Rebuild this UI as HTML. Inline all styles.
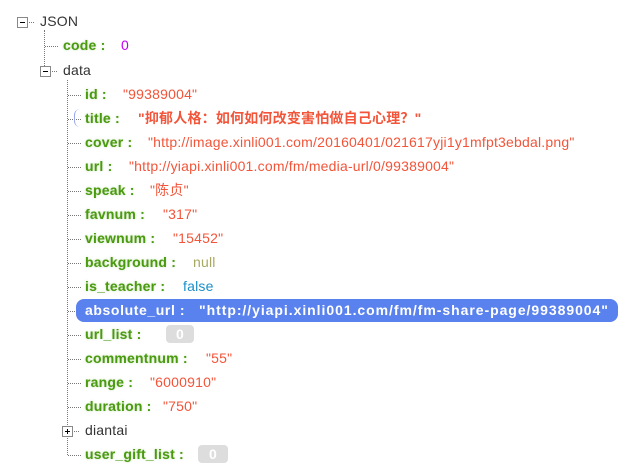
<!DOCTYPE html>
<html><head><meta charset="utf-8"><style>
body{margin:0;width:635px;height:475px;background:#fff;position:relative;overflow:hidden;font-family:"Liberation Sans","Noto Sans CJK SC",sans-serif;font-size:14px;letter-spacing:0.2px}
.r{position:absolute;height:20px;line-height:20px;white-space:nowrap}
.k{color:#4a9a0f;font-weight:bold;text-shadow:0 0 2px rgba(80,160,30,.35)}
.s{color:#f2553a}
.n{color:#333}
.v{position:absolute;white-space:nowrap;height:20px;line-height:20px}
.vl{position:absolute;border-left:1px dotted #777}
.hl{position:absolute;border-top:1px dotted #777;width:13px}
.box{position:absolute;width:9px;height:9px;border:1px solid #888;background:#fff}
.box:before{content:"";position:absolute;left:2px;top:4px;width:5px;height:1px;background:#000}
.plus:after{content:"";position:absolute;left:4px;top:2px;width:1px;height:5px;background:#000}
.badge{position:absolute;background:#ddd;color:#fff;border-radius:4px;height:18px;line-height:18px;text-align:center;font-weight:bold}
</style></head><body>
<div class="vl" style="left:44px;top:30px;height:40px"></div>
<div class="vl" style="left:67px;top:80px;height:375px"></div>
<div class="box" style="left:17px;top:17px"></div>
<div class="hl" style="left:29px;top:22px;width:5px"></div>
<div class="r n" style="left:40px;top:11px">JSON</div>
<div class="hl" style="left:45px;top:46px"></div>
<div class="r k" style="left:63px;top:35px">code :</div><div class="v" style="left:121px;top:35px;color:#c000f0">0</div>
<div class="box" style="left:40px;top:66px"></div>
<div class="hl" style="left:52px;top:71px;width:5px"></div>
<div class="r n" style="left:63px;top:60px">data</div>

<div class="hl" style="left:68px;top:95px"></div><div class="r k" style="left:85px;top:84px">id :</div><div class="v s" style="left:123px;top:84px">"99389004"</div>
<div class="hl" style="left:68px;top:119px"></div><div class="r k" style="left:85px;top:108px">title :</div><div class="v s" style="left:138px;top:108px;font-weight:bold">"抑郁人格：如何如何改变害怕做自己心理？"</div>
<div style="position:absolute;left:74px;top:109px;width:6px;height:18px;border-left:1px solid #99a8ee;border-radius:6px 0 0 6px"></div>
<div class="hl" style="left:68px;top:143px"></div><div class="r k" style="left:85px;top:132px">cover :</div><div class="v s" style="left:148px;top:132px">"http://image.xinli001.com/20160401/021617yji1y1mfpt3ebdal.png"</div>
<div class="hl" style="left:68px;top:167px"></div><div class="r k" style="left:85px;top:156px">url :</div><div class="v s" style="left:129px;top:156px">"http://yiapi.xinli001.com/fm/media-url/0/99389004"</div>
<div class="hl" style="left:68px;top:191px"></div><div class="r k" style="left:85px;top:180px">speak :</div><div class="v s" style="left:150px;top:180px">"陈贞"</div>
<div class="hl" style="left:68px;top:215px"></div><div class="r k" style="left:85px;top:204px">favnum :</div><div class="v s" style="left:163px;top:204px">"317"</div>
<div class="hl" style="left:68px;top:239px"></div><div class="r k" style="left:85px;top:228px">viewnum :</div><div class="v s" style="left:173px;top:228px">"15452"</div>
<div class="hl" style="left:68px;top:263px"></div><div class="r k" style="left:85px;top:252px">background :</div><div class="v" style="left:193px;top:252px;color:#a8a860">null</div>
<div class="hl" style="left:68px;top:287px"></div><div class="r k" style="left:85px;top:276px">is_teacher :</div><div class="v" style="left:183px;top:276px;color:#1a8fc8">false</div>
<div class="hl" style="left:68px;top:311px"></div>
<div style="position:absolute;left:76px;top:299px;width:542px;height:23px;background:#5a82ee;border-radius:8px"></div>
<div class="r" style="left:85px;top:300px;color:#fff;font-weight:bold;letter-spacing:0.6px">absolute_url :</div><div class="v" style="left:199px;top:300px;color:#fff;font-weight:bold;letter-spacing:0.95px">"http://yiapi.xinli001.com/fm/fm-share-page/99389004"</div>
<div class="hl" style="left:68px;top:335px"></div><div class="r k" style="left:85px;top:324px">url_list :</div><div class="badge" style="left:166px;top:325px;width:28px">0</div>
<div class="hl" style="left:68px;top:359px"></div><div class="r k" style="left:85px;top:348px">commentnum :</div><div class="v s" style="left:206px;top:348px">"55"</div>
<div class="hl" style="left:68px;top:383px"></div><div class="r k" style="left:85px;top:372px">range :</div><div class="v s" style="left:150px;top:372px">"6000910"</div>
<div class="hl" style="left:68px;top:407px"></div><div class="r k" style="left:85px;top:396px">duration :</div><div class="v s" style="left:163px;top:396px">"750"</div>
<div class="box plus" style="left:62px;top:426px"></div><div class="hl" style="left:74px;top:431px;width:5px"></div>
<div class="r n" style="left:85px;top:420px">diantai</div>
<div class="hl" style="left:68px;top:455px"></div><div class="r k" style="left:85px;top:444px">user_gift_list :</div><div class="badge" style="left:198px;top:445px;width:30px">0</div>
</body></html>
